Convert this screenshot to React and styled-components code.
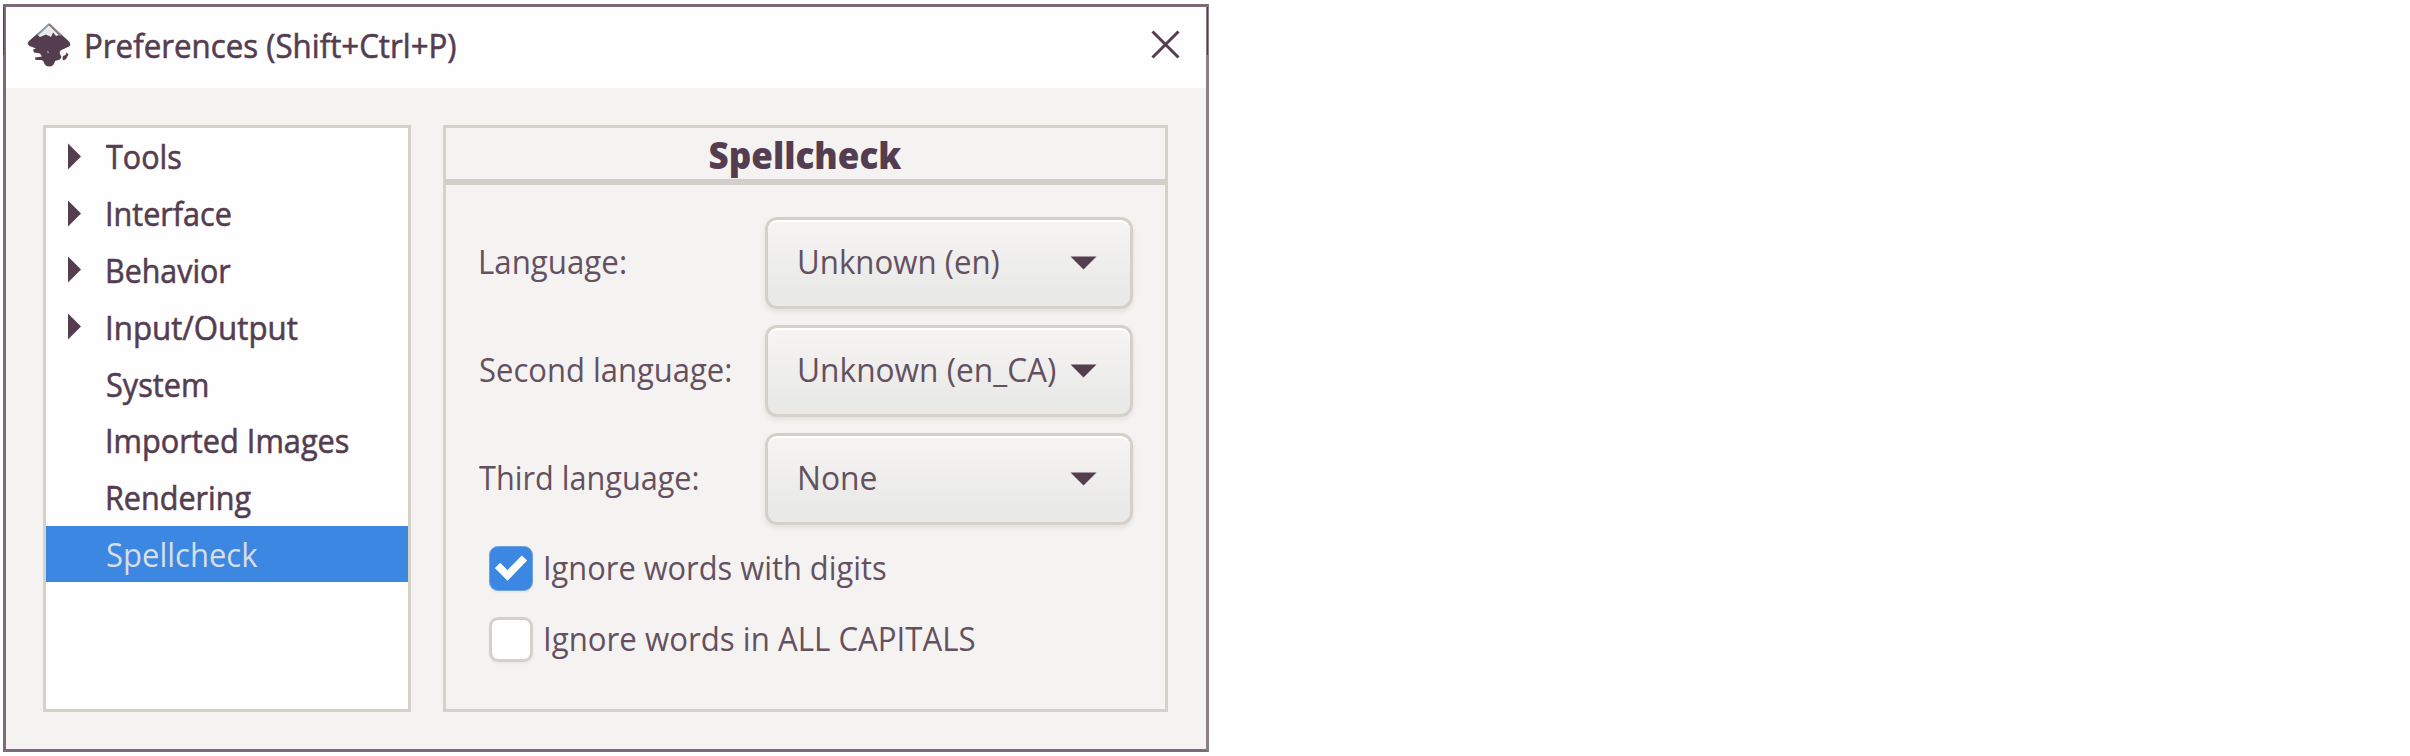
import React, { useState } from "react";
import styled, { createGlobalStyle } from "styled-components";

const ink = "#553d50";
const softInk = "#65505f";
const line = "#d6d1c8";
const blue = "#3c87e2";

const GlobalStyle = createGlobalStyle`
  *, *::before, *::after { box-sizing: border-box; }
  body { margin: 0; background: #fff; }
`;

const Page = styled.div`
  padding: 4px 0 0 3px;
  font-family: "Open Sans", "Noto Sans", sans-serif;
  font-size: 33.5px;
  font-weight: 500;
  color: ${ink};
`;

const Dialog = styled.section`
  position: relative;
  width: 1206px;
  height: 748px;
  display: flex;
  flex-direction: column;
  background: #f4f3f2;
  border: 3px solid #7b6b78;
  border-right-color: #8c8084;

  &::before,
  &::after {
    content: "";
    position: absolute;
    top: 0;
    width: 1px;
    height: 48px;
    background: ${ink};
  }
  &::before { left: -3px; }
  &::after { right: -2px; }
`;

const Text = styled.span`
  display: inline-block;
  white-space: pre;
  margin-left: ${(p) => p.$lead || 0}px;
  -webkit-text-stroke: ${(p) => (p.$strong ? 0.6 : 0)}px currentColor;
  transform: scaleX(${(p) => p.$fit});
  transform-origin: ${(p) => (p.$center ? "center" : "left center")};
`;

const TitleBar = styled.header`
  height: 81px;
  flex: none;
  display: flex;
  align-items: center;
  justify-content: space-between;
  padding: 0 26px 6px 21px;
  background: #fefefe;
`;

const TitleGroup = styled.div`
  display: flex;
  align-items: center;
  gap: 13px;
`;

const CloseButton = styled.button`
  display: flex;
  padding: 0;
  border: 0;
  background: none;
  color: ${ink};
`;

const Content = styled.main`
  flex: 1;
  display: grid;
  grid-template-columns: 368px 725px;
  column-gap: 32px;
  padding: 37px 0 37px 37px;
`;

const Sidebar = styled.nav`
  border: 3px solid ${line};
  background: #fefefe;
`;

const TreeRow = styled.div`
  height: 56.8px;
  display: flex;
  align-items: center;
  padding-left: 22px;
  background: ${(p) => (p.$selected ? blue : "transparent")};
  color: ${(p) => (p.$selected ? "#d6dee6" : ink)};
  font-weight: ${(p) => (p.$selected ? 400 : 500)};
`;

const Expander = styled.span`
  width: 37px;
  flex: none;
  display: flex;
`;

const Panel = styled.section`
  display: flex;
  flex-direction: column;
  border: 3px solid ${line};
`;

const PanelTitle = styled.h1`
  margin: 0;
  height: 57px;
  display: flex;
  align-items: center;
  justify-content: center;
  padding: 2px 2px 0 0;
  border-bottom: 6px solid #d0cfc9;
  font-size: 37px;
  font-weight: 800;
  line-height: 48px;
`;

const Fields = styled.div`
  display: flex;
  flex-direction: column;
  gap: 16px;
  padding: 32px 32px 0 32px;
  color: ${softInk};
`;

const Field = styled.div`
  height: 92px;
  display: flex;
  align-items: center;
  justify-content: space-between;
`;

const FieldLabel = styled.label`
  width: 285px;
  flex: none;
  padding-bottom: 4px;
`;

const Combo = styled.button`
  width: 368px;
  height: 92px;
  flex: none;
  display: flex;
  align-items: center;
  padding: 0 29px 0 29px;
  border: 3px solid ${line};
  border-radius: 12px;
  background: linear-gradient(#f6f5f4, #e9e9e7 85%);
  box-shadow: inset 0 2px 0 #fff, 0 3px 5px rgba(90, 80, 80, 0.1);
  color: inherit;
  font: inherit;
  text-align: left;
`;

const ComboValue = styled.span`
  width: 275px;
  flex: none;
  margin-right: -2px;
  padding-bottom: 4px;
`;

const Checks = styled.div`
  display: flex;
  flex-direction: column;
  gap: 26px;
  padding: 21px 0 0 43px;
  color: ${softInk};
`;

const CheckRow = styled.label`
  height: 45px;
  display: flex;
  align-items: center;
  gap: 10px;
`;

const CheckText = styled.span`
  padding-bottom: 4px;
`;

const Box = styled.span`
  width: 44px;
  height: 45px;
  flex: none;
  display: flex;
  align-items: center;
  justify-content: center;
  border-radius: 9px;
  border: ${(p) => (p.$on ? "1px solid #6fa3dd" : `3px solid ${line}`)};
  background: ${(p) => (p.$on ? blue : "#fefefe")};
  box-shadow: 0 2px 2px rgba(90, 80, 80, 0.06);
`;

const Logo = () => (
  <svg width="44" height="46" viewBox="0 0 44 46">
    <path
      d="M22 1.5 L41 18.500 Q45 22 42 24.500 L33.500 28.500 L32.500 31 L34.500 35 L33 37.500 L28 39 Q27 44.500 22 44.500 Q18 44.500 16.500 39.500 L15 38 L8.500 38 L8 35.500 L15 34.500 L13 31.500 L7 30.500 L6 27.500 L9 26.500 L2.500 24 Q-1 21.500 2.500 18.500 Z"
      fill={ink}
    />
    <path d="M22 3 L11 13.500 L13 15 L19 12.500 L24 15 L26 10.500 L29 14 L32 13 Z" fill="#e9ebec" />
    <path d="M22 2 L10.500 13" stroke="#8fa0ae" strokeWidth="1.6" fill="none" />
    <path d="M22 2 L34 13.500" stroke="#8c8084" strokeWidth="2" fill="none" />
    <path d="M35.500 37 L36 34 L38.500 33 L39.500 30.500 L41.500 32.500 L39 37 L36.500 38.500 Z" fill={ink} />
    <path d="M20.500 29 L21.500 31" stroke="#b4a8b0" strokeWidth="1.2" />
  </svg>
);

const CloseIcon = () => (
  <svg width="29" height="29" viewBox="0 0 29 29">
    <path d="M1.500 1.500 L27.500 27.500 M27.500 1.500 L1.500 27.500" stroke="currentColor" strokeWidth="3" />
  </svg>
);

const RightArrow = () => (
  <svg width="14" height="27" viewBox="0 0 14 27">
    <path d="M0 0.500 L13 13.500 L0 26.500 Z" fill={ink} />
  </svg>
);

const DownArrow = () => (
  <svg width="27" height="14" viewBox="0 0 27 14">
    <path d="M0.500 0.500 H26.500 L13.500 13.500 Z" fill={ink} />
  </svg>
);

const CheckMark = () => (
  <svg width="33" height="29" viewBox="0 0 33 29">
    <path d="M2.500 11.500 L12.500 21.500 L29.500 4" stroke="#fff" strokeWidth="7.500" fill="none" />
  </svg>
);

const sections = [
  { name: "Tools", open: true, fit: 0.91, lead: 1 },
  { name: "Interface", open: true, fit: 0.912 },
  { name: "Behavior", open: true, fit: 0.907 },
  { name: "Input/Output", open: true, fit: 0.933 },
  { name: "System", fit: 0.915, lead: 1 },
  { name: "Imported Images", fit: 0.917 },
  { name: "Rendering", fit: 0.912 },
  { name: "Spellcheck", fit: 0.926, lead: 1 },
];

const languages = [
  { label: "Language:", fit: 0.933, value: "Unknown (en)", valueFit: 0.932 },
  { label: "Second language:", fit: 0.925, lead: 1, value: "Unknown (en_CA)", valueFit: 0.945 },
  { label: "Third language:", fit: 0.915, lead: 1, value: "None", valueFit: 0.95 },
];

const options = [
  { label: "Ignore words with digits", fit: 0.92 },
  { label: "Ignore words in ALL CAPITALS", fit: 0.932 },
];

export default function App() {
  const [selected, setSelected] = useState("Spellcheck");
  const [checked, setChecked] = useState([true, false]);
  const toggle = (i) => setChecked(checked.map((c, n) => (n === i ? !c : c)));

  return (
    <Page>
      <GlobalStyle />
      <Dialog>
        <TitleBar>
          <TitleGroup>
            <Logo />
            <Text $fit={0.933} $strong>Preferences (Shift+Ctrl+P)</Text>
          </TitleGroup>
          <CloseButton aria-label="Close">
            <CloseIcon />
          </CloseButton>
        </TitleBar>
        <Content>
          <Sidebar>
            {sections.map((s) => (
              <TreeRow key={s.name} $selected={s.name === selected} onClick={() => setSelected(s.name)}>
                <Expander>{s.open && <RightArrow />}</Expander>
                <Text $fit={s.fit} $lead={s.lead} $strong={s.name !== selected}>{s.name}</Text>
              </TreeRow>
            ))}
          </Sidebar>
          <Panel>
            <PanelTitle>
              <Text $fit={0.945} $center>Spellcheck</Text>
            </PanelTitle>
            <Fields>
              {languages.map((l) => (
                <Field key={l.label}>
                  <FieldLabel>
                    <Text $fit={l.fit} $lead={l.lead}>{l.label}</Text>
                  </FieldLabel>
                  <Combo>
                    <ComboValue>
                      <Text $fit={l.valueFit}>{l.value}</Text>
                    </ComboValue>
                    <DownArrow />
                  </Combo>
                </Field>
              ))}
            </Fields>
            <Checks>
              {options.map((o, i) => (
                <CheckRow key={o.label} onClick={() => toggle(i)}>
                  <Box $on={checked[i]}>{checked[i] && <CheckMark />}</Box>
                  <CheckText>
                    <Text $fit={o.fit}>{o.label}</Text>
                  </CheckText>
                </CheckRow>
              ))}
            </Checks>
          </Panel>
        </Content>
      </Dialog>
    </Page>
  );
}
